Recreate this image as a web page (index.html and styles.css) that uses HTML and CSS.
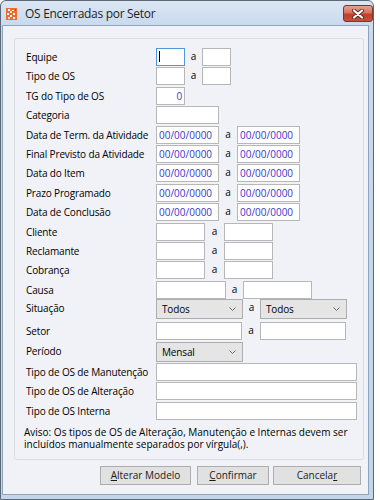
FILE: index.html
```html
<!DOCTYPE html>
<html lang="pt">
<head>
<meta charset="utf-8">
<title>OS Encerradas por Setor</title>
<link rel="stylesheet" href="styles.css">
</head>
<body>
<div class="window">
  <div class="titlebar">
    <svg class="app-icon" width="11" height="12" viewBox="0 0 11 12">
      <rect x="0" y="0" width="11" height="12" fill="#f26b2b"/>
      <rect x="2" y="1" width="2" height="2" fill="#fff"/>
      <rect x="6" y="2" width="2" height="1" fill="#fff"/>
      <rect x="4" y="3" width="2" height="2" fill="#fde3d2"/>
      <rect x="1" y="5" width="2" height="2" fill="#fff"/>
      <rect x="7" y="5" width="2" height="2" fill="#fff"/>
      <rect x="4" y="7" width="2" height="2" fill="#fff"/>
      <rect x="2" y="9" width="2" height="2" fill="#fde3d2"/>
      <rect x="7" y="9" width="2" height="2" fill="#fff"/>
      <rect x="9" y="1" width="1" height="2" fill="#e0401a"/>
    </svg>
    <span class="title">OS Encerradas por Setor</span>
    <div class="close-btn">
      <svg width="14" height="10" viewBox="0 0 14 10">
        <path d="M3 1.5 L11 8.5 M11 1.5 L3 8.5" stroke="#5a2a22" stroke-width="4" stroke-linecap="round"/>
        <path d="M3 1.5 L11 8.5 M11 1.5 L3 8.5" stroke="#ffffff" stroke-width="2.2" stroke-linecap="round"/>
      </svg>
    </div>
  </div>
  <div class="client">
    <div class="group">
      <div class="row"><span class="lbl">Equipe</span><div class="field w29 focus"><span class="caret"></span></div><span class="sep">a</span><div class="field w29"></div></div>
      <div class="row"><span class="lbl">Tipo de OS</span><div class="field w29"></div><span class="sep">a</span><div class="field w29"></div></div>
      <div class="row"><span class="lbl">TG do Tipo de OS</span><div class="field w29 num">0</div></div>
      <div class="row"><span class="lbl">Categoria</span><div class="field w63"></div></div>
      <div class="row"><span class="lbl">Data de Term. da Atividade</span><div class="field w63 date">00/00/0000</div><span class="sep sep18">a</span><div class="field w63 date">00/00/0000</div></div>
      <div class="row"><span class="lbl">Final Previsto da Atividade</span><div class="field w63 date">00/00/0000</div><span class="sep sep18">a</span><div class="field w63 date">00/00/0000</div></div>
      <div class="row"><span class="lbl">Data do Item</span><div class="field w63 date">00/00/0000</div><span class="sep sep18">a</span><div class="field w63 date">00/00/0000</div></div>
      <div class="row"><span class="lbl">Prazo Programado</span><div class="field w63 date">00/00/0000</div><span class="sep sep18">a</span><div class="field w63 date">00/00/0000</div></div>
      <div class="row"><span class="lbl">Data de Conclusão</span><div class="field w63 date">00/00/0000</div><span class="sep sep18">a</span><div class="field w63 date">00/00/0000</div></div>
      <div class="row"><span class="lbl">Cliente</span><div class="field w49"></div><span class="sep sep19">a</span><div class="field w49"></div></div>
      <div class="row"><span class="lbl">Reclamante</span><div class="field w49"></div><span class="sep sep19">a</span><div class="field w49"></div></div>
      <div class="row"><span class="lbl">Cobrança</span><div class="field w49"></div><span class="sep sep19">a</span><div class="field w49"></div></div>
      <div class="row row-causa"><span class="lbl">Causa</span><div class="field w70"></div><span class="sep">a</span><div class="field w69"></div></div>
      <div class="row row-sit"><span class="lbl">Situação</span><div class="select w87"><span>Todos</span><svg class="chev" width="7" height="4" viewBox="0 0 7 4"><path d="M0.5 0.5 L3.5 3.5 L6.5 0.5" fill="none" stroke="#6b6b6b" stroke-width="1"/></svg></div><span class="sep">a</span><div class="select w87"><span>Todos</span><svg class="chev" width="7" height="4" viewBox="0 0 7 4"><path d="M0.5 0.5 L3.5 3.5 L6.5 0.5" fill="none" stroke="#6b6b6b" stroke-width="1"/></svg></div></div>
      <div class="row"><span class="lbl">Setor</span><div class="field w86"></div><span class="sep sep18">a</span><div class="field w86"></div></div>
      <div class="row row-per"><span class="lbl">Período</span><div class="select w87"><span>Mensal</span><svg class="chev" width="7" height="4" viewBox="0 0 7 4"><path d="M0.5 0.5 L3.5 3.5 L6.5 0.5" fill="none" stroke="#6b6b6b" stroke-width="1"/></svg></div></div>
      <div class="row"><span class="lbl">Tipo de OS de Manutenção</span><div class="field w201"></div></div>
      <div class="row"><span class="lbl">Tipo de OS de Alteração</span><div class="field w201"></div></div>
      <div class="row"><span class="lbl">Tipo de OS Interna</span><div class="field w201"></div></div>
      <p class="aviso">Aviso: Os tipos de OS de Alteração, Manutenção e Internas devem ser incluídos manualmente separados por vírgula(,).</p>
    </div>
    <div class="buttons">
      <div class="btn b-alterar"><u>A</u>lterar Modelo</div>
      <div class="btn b-confirmar"><u>C</u>onfirmar</div>
      <div class="btn b-cancelar">Cancela<u>r</u></div>
    </div>
  </div>
</div>
</body>
</html>
```

FILE: styles.css
```css
html, body {
  margin: 0;
  padding: 0;
  background: #ffffff;
}

body {
  font-family: "Open Sans", "Noto Sans", sans-serif;
  font-size: 10px;
  letter-spacing: -0.15px;
  color: #000000;
}

.window {
  width: 374px;
  height: 500px;
  box-sizing: border-box;
  border: 1px solid #5b6878;
  border-radius: 6px 6px 0 0;
  background: linear-gradient(#dbe6f3 0px, #c9daee 24px, #c3d5ea 100%);
  display: flex;
  flex-direction: column;
}

.titlebar {
  height: 24px;
  display: flex;
  align-items: center;
  padding-left: 5px;
  position: relative;
}

.app-icon {
  display: block;
  margin-top: 1px;
}

.title {
  margin-left: 8px;
  font-size: 12px;
  letter-spacing: -0.3px;
  color: #1e1e1e;
  margin-top: 1px;
}

.close-btn {
  position: absolute;
  right: 0px;
  top: 4px;
  width: 30px;
  height: 17px;
  box-sizing: border-box;
  border: 1px solid #6e3a33;
  border-radius: 3px;
  background: linear-gradient(#e3a394 0%, #d9735f 45%, #c23f2c 55%, #c9503b 100%);
  display: flex;
  align-items: center;
  justify-content: center;
}

.close-btn svg {
  display: block;
}

.client {
  flex: 1;
  margin: 0 4px 4px 1px;
  border: 1px solid #8fa3b9;
  background: #f1f2f7;
  display: flex;
  flex-direction: column;
}

.group {
  margin: 12px 0 0 11px;
  width: 350px;
  height: 422px;
  box-sizing: border-box;
  border: 1px solid #d9dce1;
  border-radius: 3px;
  padding: 9px 0 0 11px;
}

.row {
  display: flex;
  align-items: flex-start;
  height: 19.4px;
}

.row-causa { height: 18.8px; }
.row-sit { height: 22.8px; }
.row-per { height: 21.4px; }

.lbl {
  width: 130px;
  flex: none;
  height: 18px;
  line-height: 18px;
  white-space: nowrap;
}

.row-sit .lbl, .row-per .lbl {
  height: 19px;
  line-height: 19px;
}

.field {
  height: 18px;
  box-sizing: border-box;
  border: 1px solid #b7b7b7;
  background: #ffffff;
  flex: none;
  position: relative;
  line-height: 16px;
}

.field.focus {
  border-color: #4e98de;
}

.caret {
  position: absolute;
  left: 2px;
  top: 2px;
  width: 1px;
  height: 11px;
  background: #000;
}

.date {
  color: #3b35c8;
  padding-left: 2px;
  letter-spacing: 0;
}

.num {
  color: #3b35c8;
  text-align: right;
  padding-right: 2px;
}

.w29 { width: 29px; }
.w49 { width: 49px; }
.w63 { width: 63px; }
.w69 { width: 69px; }
.w70 { width: 70px; }
.w86 { width: 86px; }
.w87 { width: 87px; }
.w201 { width: 201px; }

.sep {
  width: 17px;
  flex: none;
  text-align: center;
  height: 18px;
  line-height: 17px;
}
.sep18 { width: 18px; }
.sep19 { width: 19px; }

.row-sit .sep { line-height: 16px; }

.select {
  height: 20px;
  box-sizing: border-box;
  border: 1px solid #adadad;
  background: #e5e5e5;
  flex: none;
  display: flex;
  align-items: center;
  justify-content: space-between;
  padding: 0 6px 0 5px;
}

.chev {
  display: block;
}

.aviso {
  margin: 5px 0 0 -2px;
  line-height: 12px;
  width: 336px;
  letter-spacing: 0;
}

.buttons {
  display: flex;
  justify-content: flex-end;
  margin: 6px 7px 0 0;
}

.btn {
  height: 19px;
  box-sizing: border-box;
  border: 1px solid #adadad;
  background: #e1e1e1;
  text-align: center;
  line-height: 17px;
  color: #1b1b1b;
  letter-spacing: 0;
}

.btn u {
  text-decoration: underline;
  text-underline-offset: 1px;
}

.b-alterar { width: 91px; margin-right: 6px; }
.b-confirmar { width: 72px; margin-right: 4px; }
.b-cancelar { width: 88px; }
```
